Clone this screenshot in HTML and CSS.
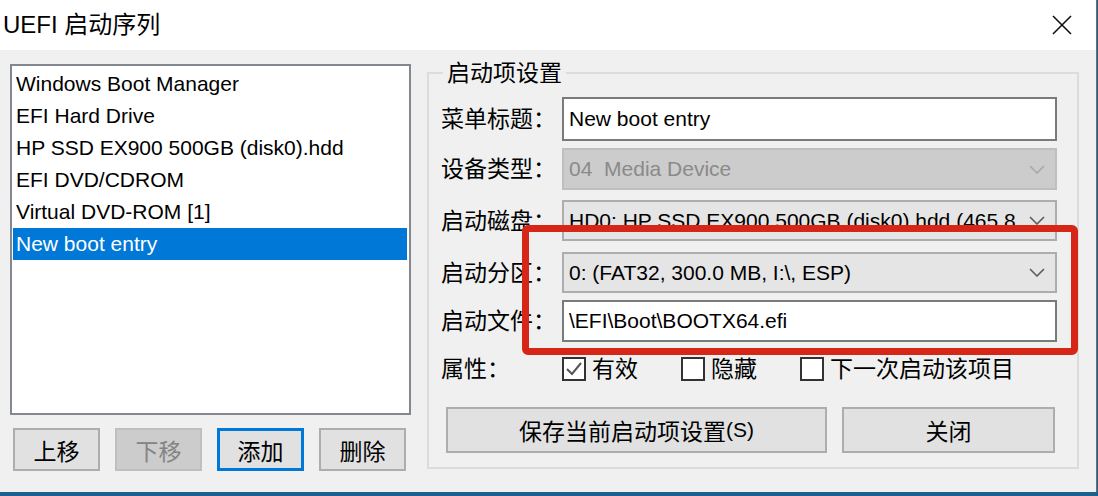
FILE: index.html
```html
<!DOCTYPE html>
<html lang="zh-CN">
<head>
<meta charset="utf-8">
<title>UEFI 启动序列</title>
<link rel="stylesheet" href="styles.css">
</head>
<body>
<div class="window">
  <div class="titlebar">
    <span class="title">UEFI 启动序列</span>
    <svg class="close" viewBox="0 0 20 20" aria-hidden="true"><path d="M1 1 L19 19 M19 1 L1 19" stroke="#111" stroke-width="1.6" fill="none"/></svg>
  </div>
  <div class="content">
    <div class="left">
      <ul class="list">
        <li>Windows Boot Manager</li>
        <li>EFI Hard Drive</li>
        <li>HP SSD EX900 500GB (disk0).hdd</li>
        <li>EFI DVD/CDROM</li>
        <li>Virtual DVD-ROM [1]</li>
        <li class="sel">New boot entry</li>
      </ul>
      <div class="list-buttons">
        <button class="btn small">上移</button>
        <button class="btn small disabled">下移</button>
        <button class="btn small default">添加</button>
        <button class="btn small">删除</button>
      </div>
    </div>
    <fieldset class="group">
      <legend>启动项设置</legend>
      <div class="row r1">
        <span class="label">菜单标题：</span>
        <div class="field input">New boot entry</div>
      </div>
      <div class="row r2">
        <span class="label">设备类型：</span>
        <div class="field combo disabled"><span class="val">04  Media Device</span><svg class="chev" viewBox="0 0 16 9"><polyline points="1,1 8,8 15,1"/></svg></div>
      </div>
      <div class="row r3">
        <span class="label">启动磁盘：</span>
        <div class="field combo"><span class="val">HD0: HP SSD EX900 500GB (disk0).hdd (465.8</span><svg class="chev" viewBox="0 0 16 9"><polyline points="1,1 8,8 15,1"/></svg></div>
      </div>
      <div class="row r4">
        <span class="label">启动分区：</span>
        <div class="field combo"><span class="val">0: (FAT32, 300.0 MB, I:\, ESP)</span><svg class="chev" viewBox="0 0 16 9"><polyline points="1,1 8,8 15,1"/></svg></div>
      </div>
      <div class="row r5">
        <span class="label">启动文件：</span>
        <div class="field input">\EFI\Boot\BOOTX64.efi</div>
      </div>
      <div class="attrs">
        <span class="label">属性：</span>
        <div class="checks">
          <span class="check"><span class="box"><svg viewBox="0 0 20 20"><polyline points="3,10 8,15 17,4"/></svg></span>有效</span>
          <span class="check"><span class="box"></span>隐藏</span>
          <span class="check"><span class="box"></span>下一次启动该项目</span>
        </div>
      </div>
      <div class="actions">
        <button class="btn save">保存当前启动项设置<span class="latin">(S)</span></button>
        <button class="btn shut">关闭</button>
      </div>
    </fieldset>
  </div>
  <div class="annot"></div>
</div>
</body>
</html>
```
FILE: styles.css
```css
* { box-sizing: border-box; }
html, body { margin: 0; padding: 0; }
body {
  width: 1098px;
  height: 496px;
  overflow: hidden;
  background: #1d5f8e;
  font-family: "Liberation Sans", "Noto Sans CJK SC", sans-serif;
  color: #000;
}
.window {
  position: relative;
  width: 1097px;
  height: 492px;
  background: #f0f0f0;
  border-right: 1px solid #6e6e6e;
}
.titlebar {
  height: 50px;
  background: #fff;
  display: flex;
  align-items: center;
  padding: 0 24px 0 3px;
}
.title {
  font-size: 24px;
  line-height: 30px;
}
.close {
  margin-left: auto;
  width: 20px;
  height: 20px;
}
.content {
  display: flex;
  align-items: flex-start;
  padding-left: 10px;
}
.left {
  margin-top: 14px;
  width: 401px;
}
.list {
  list-style: none;
  margin: 0;
  padding: 2px 2px 0 1px;
  height: 351px;
  border: 2px solid #828790;
  background: #fff;
}
.list li {
  height: 32px;
  line-height: 32px;
  padding-left: 3px;
  font-size: 21px;
  white-space: nowrap;
}
.list li.sel {
  background: #0078d7;
  color: #fff;
}
.list-buttons {
  display: flex;
  gap: 15px;
  margin: 13px 0 0 3px;
}
.btn {
  font-family: inherit;
  font-size: 23px;
  color: #000;
  background: #e1e1e1;
  border: 2px solid #adadad;
  padding: 0;
  margin: 0;
  display: flex;
  align-items: center;
  justify-content: center;
}
.btn.small { width: 87px; height: 43px; }
.btn.disabled { background: #cccccc; border-color: #bfbfbf; color: #838383; }
.btn.default { border: 3px solid #0078d7; }
.btn.save { width: 381px; height: 46px; }
.btn.shut { width: 213px; height: 46px; }
.latin { font-size: 21px; }

.group {
  margin: 10px 0 0 16px;
  width: 652px;
  height: 409px;
  border: 2px solid #dcdcdc;
  padding: 11px 20px 0 12px;
  min-width: 0;
}
.group legend {
  font-size: 23px;
  line-height: 26px;
  padding: 0 4px;
  margin-left: 2px;
}
.row {
  display: flex;
  align-items: center;
}
.label {
  width: 121px;
  flex: none;
  font-size: 23px;
  line-height: 28px;
  white-space: nowrap;
}
.field {
  width: 495px;
  display: flex;
  align-items: center;
  font-size: 21px;
  white-space: pre;
}
.r1 .field { height: 44px; }
.r2 { margin-top: 7px; }
.r2 .field { height: 42px; }
.r3 { margin-top: 10px; }
.r3 .field { height: 41px; }
.r4 { margin-top: 11px; }
.r4 .field { height: 41px; }
.r5 { margin-top: 7px; }
.r5 .field { height: 42px; }
.input {
  background: #fff;
  border: 2px solid #7a7a7a;
  padding-left: 5px;
}
.combo {
  background: #e5e5e5;
  border: 2px solid #adadad;
  padding: 0 10px 0 5px;
}
.combo .val {
  flex: 1;
  white-space: pre;
  margin-right: 8px;
}
.combo.disabled {
  background: #cccccc;
  border-color: #bfbfbf;
  color: #8a8a8a;
}
.chev {
  width: 16px;
  height: 9px;
  flex: none;
  fill: none;
  stroke: #5c5c5c;
  stroke-width: 1.6;
}
.combo.disabled .chev { stroke: #a8a8a8; }
.attrs {
  display: flex;
  align-items: center;
  margin-top: 13px;
  height: 28px;
}
.checks {
  display: flex;
  align-items: center;
  gap: 43px;
}
.check {
  display: flex;
  align-items: center;
  gap: 6px;
  font-size: 23px;
  line-height: 28px;
}
.box {
  width: 24px;
  height: 24px;
  border: 2px solid #333;
  background: #fff;
  display: flex;
}
.box svg {
  width: 20px;
  height: 20px;
  fill: none;
  stroke: #555;
  stroke-width: 2;
}
.actions {
  display: flex;
  gap: 15px;
  margin: 24px 0 0 5px;
}
.annot {
  position: absolute;
  left: 522px;
  top: 225px;
  width: 556px;
  height: 130px;
  border: 7px solid #d52617;
  border-radius: 6px;
}
```
